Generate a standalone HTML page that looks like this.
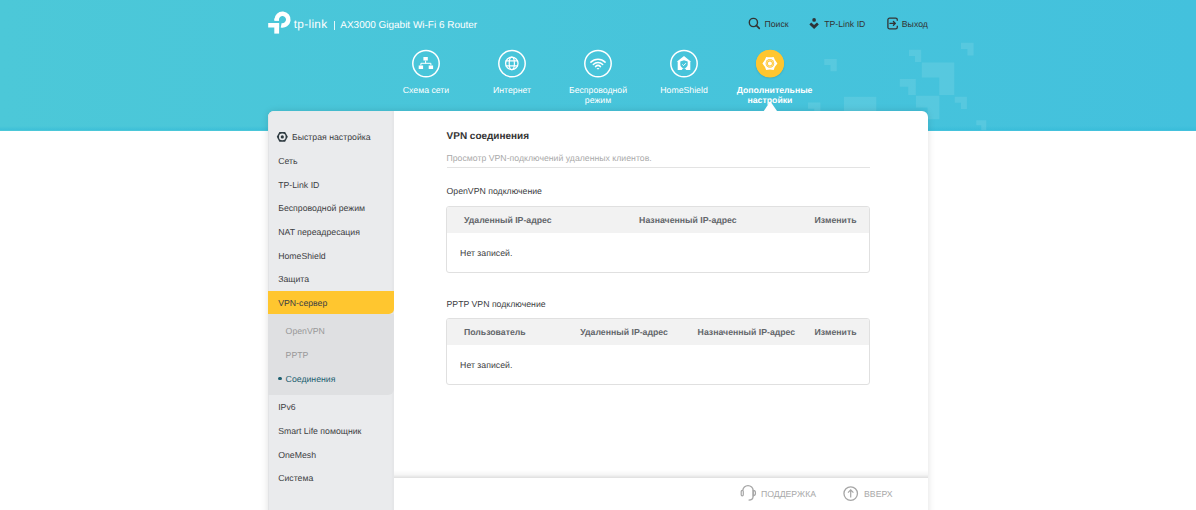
<!DOCTYPE html>
<html><head><meta charset="utf-8"><style>
html,body{margin:0;padding:0}
body{width:1196px;height:510px;overflow:hidden;position:relative;background:#fff;font-family:"Liberation Sans",sans-serif;text-rendering:geometricPrecision}
.abs{position:absolute}
.t{position:absolute;white-space:nowrap;line-height:normal}
#hdr{position:absolute;left:0;top:0;width:1196px;height:130.8px;background:linear-gradient(90deg,#4cc8d8,#43c1dd)}
#hb{position:absolute;left:0;top:126.3px;width:1196px;height:4px;background:linear-gradient(180deg,rgba(45,185,212,0),rgba(50,185,215,.55))}
#deco{position:absolute;left:0;top:0}
.nl{position:absolute;width:100px;text-align:center;color:#fff;font-size:8.72px;line-height:10px;white-space:nowrap}
#card{position:absolute;left:268.3px;top:110.7px;width:659.5px;height:420px;background:#fff;border-radius:6px 6px 0 0;box-shadow:0 0 7px rgba(0,0,0,.13)}
#side{position:absolute;left:268.3px;top:110.7px;width:125.5px;height:420px;background:#eaebed;border-radius:6px 0 0 0;box-shadow:inset -2px 0 2px rgba(0,0,0,.025),inset 1px 0 1px rgba(0,0,0,.035)}
#act{position:absolute;left:268.3px;top:290.9px;width:125.5px;height:23.3px;background:#ffc62f;border-radius:0 0 5px 0}
#sub{position:absolute;left:268.3px;top:314.2px;width:125.5px;height:80.5px;background:#dfe0e2;border-radius:0 0 6px 0}
.tbl{position:absolute;left:446.3px;width:423.4px;border:1px solid #e0e0e0;border-radius:3px;overflow:hidden;box-sizing:border-box}
.th{height:25.3px;background:#f2f2f2}
#foot{position:absolute;left:393.8px;top:477.6px;width:533.9px;height:40px;background:#fff}
#fsh{position:absolute;left:393.8px;top:469.6px;width:533.9px;height:8px;background:linear-gradient(180deg,rgba(0,0,0,0),rgba(0,0,0,.04) 60%,rgba(0,0,0,.13))}
</style></head><body>
<div id="hdr"></div><div id="hb"></div>
<svg id="deco" width="1196" height="131" viewBox="0 0 1196 131"><g fill="rgba(255,255,255,0.10)"><path d="M824.3 58.9h12.4v12.4h-6.2v-6.2h-6.2z"/><path d="M808 102.6h12.4v12.4h-6.2v-6.2h-6.2z"/><rect x="843.9" y="96.8" width="32.4" height="20"/><path d="M909 49.7h12.2v12.2h-6.2v-5.999999999999999h-5.999999999999999z"/><path d="M921.8 62.5h32.5v32.5h-15v-17.5h-17.5z"/><path d="M899.8 79.1h16v16h-7.6v-8.4h-8.4z"/><path d="M915.9 95.8h23.5v23.5h-11.8v-11.7h-11.7z"/><path d="M954.7 96.8h12.2v12.2h-6v-6.199999999999999h-6.199999999999999z"/><path d="M961 42.8h12.6v12.6h-6.2v-6.3999999999999995h-6.3999999999999995z"/><path d="M976.3 120.3h10v10h-5v-5h-5z"/></g></svg>
<svg class="abs" style="left:266px;top:9px" width="28" height="27" viewBox="266 9 28 27">
<g fill="#fff">
<path d="M276.65 19.6 A5.85 5.85 0 1 1 281.2 25.3" fill="none" stroke="#fff" stroke-width="4.6"/>
<rect x="274.3" y="18.6" width="4.7" height="2.3"/>
<rect x="268.2" y="23" width="10.9" height="4.5"/>
<rect x="274.3" y="23" width="4.8" height="10.6"/>
</g></svg>
<div class="t" style="left:293.8px;top:16.7px;font-size:11.8px;font-weight:400;color:#fff;letter-spacing:0.3px;">tp-link</div>
<div class="abs" style="left:333.6px;top:20.5px;width:1px;height:9px;background:rgba(255,255,255,.85)"></div>
<div class="t" style="left:340.3px;top:19.7px;font-size:9.97px;font-weight:400;color:#fff;">AX3000 Gigabit Wi-Fi 6 Router</div>
<svg class="abs" style="left:746px;top:15px" width="16" height="16" viewBox="746 15 16 16">
<circle cx="753.4" cy="22.5" r="4.1" fill="none" stroke="#333" stroke-width="1.4"/>
<path d="M756.3 25.4 L759.3 28.4" stroke="#333" stroke-width="1.6" stroke-linecap="round"/>
</svg>
<div class="t" style="left:764.4px;top:18.8px;font-size:8.72px;font-weight:400;color:#333;">Поиск</div>
<svg class="abs" style="left:806px;top:15px" width="16" height="16" viewBox="806 15 16 16">
<circle cx="814.1" cy="19.9" r="1.85" fill="#2e3338"/>
<path d="M809.4 24.4 L811.2 22.6 L814.1 24.9 L817 22.6 L818.8 24.4 L814.1 29.1 Z" fill="#2e3338"/>
</svg>
<div class="t" style="left:824.2px;top:18.8px;font-size:8.72px;font-weight:400;color:#333;">TP-Link ID</div>
<svg class="abs" style="left:884px;top:15px" width="16" height="16" viewBox="884 15 16 16">
<path d="M897.3 20.8 V19.8 A1.7 1.7 0 0 0 895.6 18.1 H889.6 A1.7 1.7 0 0 0 887.9 19.8 V27.2 A1.7 1.7 0 0 0 889.6 28.9 H895.6 A1.7 1.7 0 0 0 897.3 27.2 V25.8" fill="none" stroke="#333" stroke-width="1.3"/>
<path d="M890 23.4 H895.2 M893.4 21.5 L895.4 23.4 L893.4 25.3" fill="none" stroke="#333" stroke-width="1.3" stroke-linecap="round" stroke-linejoin="round"/>
</svg>
<div class="t" style="left:901.8px;top:18.8px;font-size:8.72px;font-weight:400;color:#333;">Выход</div>
<div class="abs" style="left:756.1px;top:49.7px;width:27.8px;height:27.8px;border-radius:50%;background:#ffc62f;box-shadow:0 1px 2px rgba(0,0,0,.15)"></div>
<svg id="nav" class="abs" style="left:0;top:0" width="1196" height="111" viewBox="0 0 1196 111"><circle cx="426" cy="63.6" r="13.2" fill="none" stroke="#fff" stroke-width="1.5"/><path d="M423.4 57.1h4.4v3.5h-4.4z M418.7 65.4h4.4v3.5h-4.4z M428.7 65.4h4.4v3.5h-4.4z" fill="#fff"/>
<path d="M425.6 60.6V63.3 M420.9 65.4V63.3H430.9V65.4" fill="none" stroke="#fff" stroke-width="1"/><circle cx="512" cy="63.6" r="13.2" fill="none" stroke="#fff" stroke-width="1.5"/><circle cx="511.8" cy="63.4" r="6.2" fill="none" stroke="#fff" stroke-width="1.3"/>
<ellipse cx="511.8" cy="63.4" rx="2.6" ry="6.2" fill="none" stroke="#fff" stroke-width="1.2"/>
<path d="M505.6 60.9H518 M505.6 65.9H518" stroke="#fff" stroke-width="1.1"/><circle cx="598" cy="63.6" r="13.2" fill="none" stroke="#fff" stroke-width="1.5"/><path d="M590.9 62.1 A10 10 0 0 1 605.1 62.1" fill="none" stroke="#fff" stroke-width="1.5" stroke-linecap="round"/>
<path d="M593.3 64.5 A6.6 6.6 0 0 1 602.7 64.5" fill="none" stroke="#fff" stroke-width="1.5" stroke-linecap="round"/>
<path d="M595.5 66.6 A3.6 3.6 0 0 1 600.5 66.6" fill="none" stroke="#fff" stroke-width="1.5" stroke-linecap="round"/>
<path d="M596.5 68.1 L599.5 68.1 L598 69.8Z" fill="#fff"/><circle cx="684" cy="63.6" r="13.2" fill="none" stroke="#fff" stroke-width="1.5"/><path d="M684 56.1 L691.1 61.8 H690.3 V69.9 H686.2 A2.6 2.6 0 0 0 684 68.2 A2.6 2.6 0 0 0 681.8 69.9 H677.7 V61.8 H676.7 Z" fill="#fff"/>
<path d="M680.3 61.6 L684 60.3 L687.7 61.6 V64.8 C687.7 66.6 686 67.9 684 68.7 C682 67.9 680.3 66.6 680.3 64.8 Z" fill="#49c5da"/>
<path d="M682.3 64.4 L683.6 65.6 L685.9 63.2" fill="none" stroke="#fff" stroke-width="1"/><circle cx="770" cy="63.6" r="13.9" fill="#ffc62f"/><path d="M777.40 63.40 Q774.75 66.20 773.65 69.90 Q769.90 69.00 766.15 69.90 Q765.05 66.20 762.40 63.40 Q765.05 60.60 766.15 56.90 Q769.90 57.80 773.65 56.90 Q774.75 60.60 777.40 63.40Z" fill="#fff"/>
<circle cx="769.9" cy="63.4" r="4.3" fill="#ffc62f"/>
<circle cx="769.9" cy="63.4" r="3.35" fill="none" stroke="#fff" stroke-width="0.6" stroke-opacity="0.7"/>
<circle cx="769.9" cy="63.4" r="2.0" fill="#fff"/></svg>
<div class="nl" style="left:376px;top:84.9px;font-weight:400">Схема сети</div>
<div class="nl" style="left:462px;top:84.9px;font-weight:400">Интернет</div>
<div class="nl" style="left:548px;top:84.9px;font-weight:400">Беспроводной<br>режим</div>
<div class="nl" style="left:634px;top:84.9px;font-weight:400">HomeShield</div>
<div class="nl" style="left:720px;top:84.9px;font-weight:700"><span style="position:relative;left:4.6px">Дополнительные</span><br>настройки</div>
<div id="card"></div>
<div id="side"></div>
<div id="act"></div>
<div id="sub"></div>
<svg class="abs" style="left:275px;top:130px" width="15" height="14" viewBox="275 130 15 14">
<path d="M276.8 136.85 L279.4 131.9 H285.1 L287.8 136.85 L285.1 141.8 H279.4 Z" fill="#2f3b41"/>
<circle cx="282.3" cy="136.9" r="3.3" fill="#eaebed"/>
<circle cx="282.3" cy="136.9" r="1.6" fill="#2f3b41"/>
</svg>
<div class="t" style="left:292.0px;top:132.2px;font-size:8.72px;font-weight:400;color:#3d4043;">Быстрая настройка</div>
<div class="t" style="left:278.2px;top:155.9px;font-size:8.72px;font-weight:400;color:#3d4043;">Сеть</div>
<div class="t" style="left:278.2px;top:179.6px;font-size:8.72px;font-weight:400;color:#3d4043;">TP-Link ID</div>
<div class="t" style="left:278.2px;top:203.2px;font-size:8.72px;font-weight:400;color:#3d4043;">Беспроводной режим</div>
<div class="t" style="left:278.2px;top:226.9px;font-size:8.72px;font-weight:400;color:#3d4043;">NAT переадресация</div>
<div class="t" style="left:278.2px;top:250.60000000000002px;font-size:8.72px;font-weight:400;color:#3d4043;">HomeShield</div>
<div class="t" style="left:278.2px;top:274.3px;font-size:8.72px;font-weight:400;color:#3d4043;">Защита</div>
<div class="t" style="left:278.2px;top:297.9px;font-size:8.72px;font-weight:400;color:#3d4043;">VPN-сервер</div>
<div class="t" style="left:278.2px;top:402.2px;font-size:8.72px;font-weight:400;color:#3d4043;">IPv6</div>
<div class="t" style="left:278.2px;top:425.9px;font-size:8.72px;font-weight:400;color:#3d4043;">Smart Life помощник</div>
<div class="t" style="left:278.2px;top:449.6px;font-size:8.72px;font-weight:400;color:#3d4043;">OneMesh</div>
<div class="t" style="left:278.2px;top:473.3px;font-size:8.72px;font-weight:400;color:#3d4043;">Система</div>
<div class="t" style="left:285.6px;top:326.4px;font-size:8.72px;font-weight:400;color:#999;">OpenVPN</div>
<div class="t" style="left:285.6px;top:350.0px;font-size:8.72px;font-weight:400;color:#999;">PPTP</div>
<div class="t" style="left:285.6px;top:373.8px;font-size:8.72px;font-weight:400;color:#1d5f70;">Соединения</div>
<div class="abs" style="left:278.4px;top:376.7px;width:3.4px;height:3.4px;border-radius:50%;background:#1d5f70"></div>
<div class="t" style="left:446.6px;top:130.7px;font-size:9.97px;font-weight:700;color:#333;">VPN соединения</div>
<div class="t" style="left:446.5px;top:152.7px;font-size:8.72px;font-weight:400;color:#aaa;">Просмотр VPN-подключений удаленных клиентов.</div>
<div class="abs" style="left:446.5px;top:166.9px;width:423.5px;height:1px;background:#e3e3e3"></div>
<div class="t" style="left:446.5px;top:186.1px;font-size:8.72px;font-weight:400;color:#3d4043;">OpenVPN подключение</div>
<div class="tbl" style="top:206.3px;height:66.6px"><div class="th"></div></div>
<div class="t" style="left:463.9px;top:215.2px;font-size:8.72px;font-weight:700;color:#63666a;">Удаленный IP-адрес</div>
<div class="t" style="left:639.1px;top:215.2px;font-size:8.72px;font-weight:700;color:#63666a;">Назначенный IP-адрес</div>
<div class="t" style="left:814.6px;top:215.2px;font-size:8.72px;font-weight:700;color:#63666a;">Изменить</div>
<div class="t" style="left:460.1px;top:248.0px;font-size:8.72px;font-weight:400;color:#3d4043;">Нет записей.</div>
<div class="t" style="left:446.5px;top:299.0px;font-size:8.72px;font-weight:400;color:#3d4043;">PPTP VPN подключение</div>
<div class="tbl" style="top:318.3px;height:66.9px"><div class="th"></div></div>
<div class="t" style="left:463.9px;top:327.2px;font-size:8.72px;font-weight:700;color:#63666a;">Пользователь</div>
<div class="t" style="left:580.2px;top:327.2px;font-size:8.72px;font-weight:700;color:#63666a;">Удаленный IP-адрес</div>
<div class="t" style="left:697.6px;top:327.2px;font-size:8.72px;font-weight:700;color:#63666a;">Назначенный IP-адрес</div>
<div class="t" style="left:814.6px;top:327.2px;font-size:8.72px;font-weight:700;color:#63666a;">Изменить</div>
<div class="t" style="left:460.1px;top:360.3px;font-size:8.72px;font-weight:400;color:#3d4043;">Нет записей.</div>
<div id="fsh"></div><div id="foot"></div>
<svg class="abs" style="left:738px;top:484px" width="20" height="19" viewBox="738 484 20 19">
<path d="M742.9 490.2 A5.1 4.6 0 0 1 753.1 490.2 V496.2 C753.1 498.8 751.4 500.1 748.6 500.2" fill="none" stroke="#a6a6a6" stroke-width="1.3"/>
<rect x="741.2" y="490.4" width="2.1" height="5.4" rx="1" fill="none" stroke="#a6a6a6" stroke-width="1.2"/>
<path d="M753.2 490.4 a2.3 2.7 0 0 1 0 5.4z" fill="none" stroke="#a6a6a6" stroke-width="1.2"/>
</svg>
<div class="t" style="left:760.9px;top:488.5px;font-size:8.72px;font-weight:400;color:#aaa;">ПОДДЕРЖКА</div>
<svg class="abs" style="left:841px;top:484px" width="20" height="19" viewBox="841 484 20 19">
<circle cx="850.7" cy="493.6" r="6.75" fill="none" stroke="#a6a6a6" stroke-width="1.3"/>
<path d="M850.7 497.6 V489.9 M848 492.6 L850.7 489.9 L853.4 492.6" fill="none" stroke="#a6a6a6" stroke-width="1.2"/>
</svg>
<div class="t" style="left:864px;top:488.7px;font-size:8.72px;font-weight:400;color:#aaa;">ВВЕРХ</div>
<svg class="abs" style="left:762px;top:100px" width="17" height="12" viewBox="762 100 17 12"><path d="M763.8 111 L770.3 101.2 L777 111Z" fill="#fff"/></svg>
</body></html>
